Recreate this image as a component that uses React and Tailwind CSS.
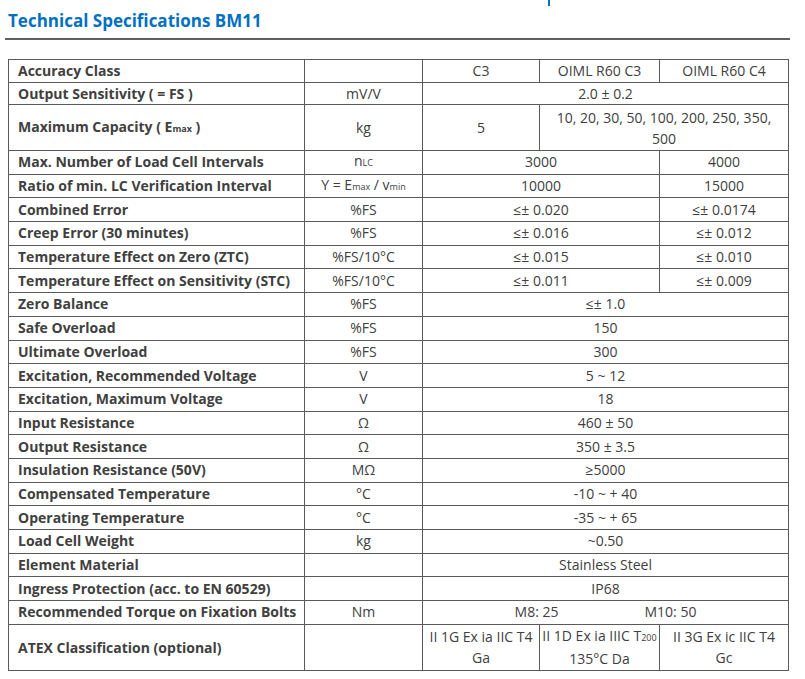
const cell = "border border-[#5a5a5a] px-0 text-center align-middle";
const label = "border border-[#5a5a5a] pl-[9px] text-left font-bold align-middle whitespace-nowrap";

function Sub({ children }) {
  return <span className="text-[9px]">{children}</span>;
}

const rows = [
  ["Max. Number of Load Cell Intervals", <>n<Sub>LC</Sub></>, [["3000", 2], ["4000", 1]]],
  ["Ratio of min. LC Verification Interval", <>Y = E<Sub>max</Sub> / v<Sub>min</Sub></>, [["10000", 2], ["15000", 1]]],
  ["Combined Error", "%FS", [["≤± 0.020", 2], ["≤± 0.0174", 1]]],
  ["Creep Error (30 minutes)", "%FS", [["≤± 0.016", 2], ["≤± 0.012", 1]]],
  ["Temperature Effect on Zero (ZTC)", "%FS/10°C", [["≤± 0.015", 2], ["≤± 0.010", 1]]],
  ["Temperature Effect on Sensitivity (STC)", "%FS/10°C", [["≤± 0.011", 2], ["≤± 0.009", 1]]],
  ["Zero Balance", "%FS", [["≤± 1.0", 3]]],
  ["Safe Overload", "%FS", [["150", 3]]],
  ["Ultimate Overload", "%FS", [["300", 3]]],
  ["Excitation, Recommended Voltage", "V", [["5 ~ 12", 3]]],
  ["Excitation, Maximum Voltage", "V", [["18", 3]]],
  ["Input Resistance", "Ω", [["460 ± 50", 3]]],
  ["Output Resistance", "Ω", [["350 ± 3.5", 3]]],
  ["Insulation Resistance (50V)", "MΩ", [["≥5000", 3]]],
  ["Compensated Temperature", "°C", [["-10 ~ + 40", 3]]],
  ["Operating Temperature", "°C", [["-35 ~ + 65", 3]]],
  ["Load Cell Weight", "kg", [["~0.50", 3]]],
  ["Element Material", "", [["Stainless Steel", 3]]],
  ["Ingress Protection (acc. to EN 60529)", "", [["IP68", 3]]],
  ["Recommended Torque on Fixation Bolts", "Nm", [[<span className="inline-flex gap-[86px]"><span>M8: 25</span><span>M10: 50</span></span>, 3]]],
];

export default function App() {
  return (
    <div className="relative w-[805px] h-[679px] bg-white text-[#404040] font-['Open_Sans',sans-serif] text-[14px] leading-[18px]">

      <div className="absolute left-[548px] top-0 w-[2px] h-[6px] bg-[#0070c0]" />

      {/* TITLE */}

      <div className="pl-[8px] pt-[10px] h-[38px]">
        <h1 className="text-[#0070c0] font-bold text-[17px] leading-[22px]">
          Technical Specifications BM11
        </h1>
      </div>

      <div className="mx-[5px] w-[785px] h-[2px] bg-[#5f5f5f]" />

      {/* TABLE */}

      <table className="ml-[8px] mt-[19px] w-[780px] table-fixed border-collapse">
        <colgroup>
          <col className="w-[296px]" />
          <col className="w-[118px]" />
          <col className="w-[117px]" />
          <col className="w-[120px]" />
          <col className="w-[129px]" />
        </colgroup>
        <tbody>

          <tr className="h-[23px]">
            <td className={label}>Accuracy Class</td>
            <td className={cell}></td>
            <td className={cell}>C3</td>
            <td className={cell}>OIML R60 C3</td>
            <td className={cell}>OIML R60 C4</td>
          </tr>

          <tr className="h-[22px]">
            <td className={label}>Output Sensitivity ( = FS )</td>
            <td className={cell}>mV/V</td>
            <td className={cell} colSpan={3}>2.0 ± 0.2</td>
          </tr>

          <tr className="h-[46px]">
            <td className={label}>Maximum Capacity ( E<Sub>max</Sub> )</td>
            <td className={cell}>kg</td>
            <td className={cell}>5</td>
            <td className={cell + " leading-[21px]"} colSpan={2}>
              10, 20, 30, 50, 100, 200, 250, 350,<br />500
            </td>
          </tr>

          {rows.map(([name, unit, vals], i) => (
            <tr key={i} className="h-[23.7px]">
              <td className={label}>{name}</td>
              <td className={cell}>{unit}</td>
              {vals.map(([v, span], j) => (
                <td key={j} className={cell} colSpan={span}>{v}</td>
              ))}
            </tr>
          ))}

          <tr className="h-[46px] leading-[21px]">
            <td className={label}>ATEX Classification (optional)</td>
            <td className={cell}></td>
            <td className={cell + " whitespace-nowrap"}>II 1G Ex ia IIC T4<br />Ga</td>
            <td className={cell + " whitespace-nowrap"}>II 1D Ex ia IIIC T<Sub>200</Sub><br />135°C Da</td>
            <td className={cell + " whitespace-nowrap"}>II 3G Ex ic IIC T4<br />Gc</td>
          </tr>

        </tbody>
      </table>

    </div>
  );
}
